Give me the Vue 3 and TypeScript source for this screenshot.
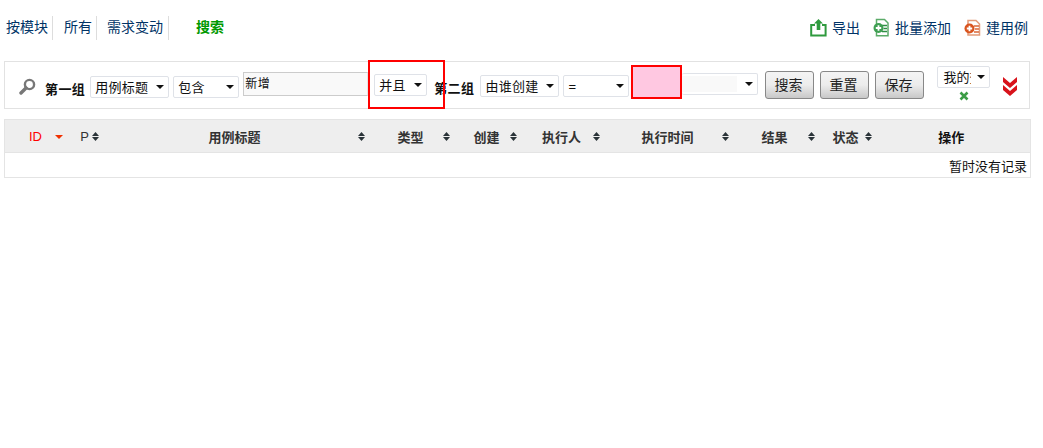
<template>
  <div class="page">
    <div class="top-bar">
      <nav class="tabs">
        <a v-for="tab in tabs" :key="tab" class="tab">{{ tab }}</a>
        <a class="tab-search">搜索</a>
      </nav>
      <div class="actions">
        <a class="action">
          <svg width="17" height="19" viewBox="0 0 17 19">
            <path d="M5 7H1.200v10.600h14.400V7H12" fill="none" stroke="#2f9a3e" stroke-width="2" />
            <path d="M8.500 1 13 5.600h-2.700V12H6.700V5.600H4z" fill="#2f9a3e" />
          </svg>
          导出
        </a>
        <a class="action">
          <svg width="17" height="19" viewBox="0 0 17 19">
            <path d="M3.500 1.500h8l3.500 3.500v12.800H3.500z" fill="#fff" stroke="#5bab69" stroke-width="1.500" />
            <path d="M9 7.500h5M10.500 10.500h3.500M9 13.500h5" stroke="#2f8f44" stroke-width="1.600" />
            <circle cx="5.500" cy="10" r="5" fill="#3f9f52" />
            <path d="M2.800 10h5.400M5.500 7.300v5.400" stroke="#fff" stroke-width="1.800" />
          </svg>
          批量添加
        </a>
        <a class="action">
          <svg width="17" height="19" viewBox="0 0 17 19">
            <path d="M4 2.500h8l3.500 3.500v11H4z" fill="#fff" stroke="#e39a78" stroke-width="1.500" />
            <path d="M10 8h5M11 11h4M10 14h5" stroke="#d9683a" stroke-width="1.600" />
            <circle cx="5.500" cy="10.500" r="5" fill="#d9541e" />
            <path d="M2.800 10.500h5.400M5.500 7.800v5.400" stroke="#fff" stroke-width="1.800" />
          </svg>
          建用例
        </a>
      </div>
    </div>

    <form class="search-bar" @submit.prevent>
      <svg class="search-icon" width="17" height="17" viewBox="0 0 17 17">
        <circle cx="10.500" cy="6.500" r="4.600" fill="#fff" stroke="#777" stroke-width="2.400" />
        <path d="M7 10 2 15" stroke="#777" stroke-width="3.400" stroke-linecap="round" />
      </svg>
      <b class="group-label first">第一组</b>
      <span class="select-wrap field-1">
        <select class="select"><option>用例标题</option></select>
      </span>
      <span class="select-wrap field-2">
        <select class="select"><option>包含</option></select>
      </span>
      <input class="text-input" value="新增" />
      <span class="and-or">
        <span class="select-wrap and-select">
          <select class="select"><option>并且</option></select>
        </span>
        <i class="red-frame"></i>
      </span>
      <b class="group-label second">第二组</b>
      <span class="select-wrap field-3">
        <select class="select"><option>由谁创建</option></select>
      </span>
      <span class="select-wrap field-4">
        <select class="select"><option>=</option></select>
      </span>
      <div class="pink-box"></div>
      <span class="select-wrap value-select">
        <span class="value-fill"></span>
      </span>
      <button class="btn first-btn" type="button">搜索</button>
      <button class="btn" type="button">重置</button>
      <button class="btn" type="button">保存</button>
      <div class="saved">
        <span class="select-wrap saved-select">
          <select class="select"><option>我的查询</option></select>
        </span>
        <svg class="remove" width="10" height="10" viewBox="0 0 10 10">
          <path d="M1.500 1.500l7 7M8.500 1.500l-7 7" stroke="#3c9c46" stroke-width="2.600" />
        </svg>
      </div>
      <svg class="more" width="14" height="19" viewBox="0 0 14 19">
        <path d="M0 0l7 6 7-6v5l-7 6-7-6z" fill="#d8131b" />
        <path d="M0 8l7 6 7-6v5l-7 6-7-6z" fill="#d8131b" />
      </svg>
    </form>

    <table class="list">
      <thead>
        <tr>
          <th
            v-for="col in columns"
            :key="col.label"
            :class="{ active: col.label === 'ID', dark: col.label === '操作', thin: col.label === 'P' }"
            :style="{ width: col.width + 'px' }"
          >
            {{ col.label }}
            <i v-if="col.label === 'ID'" class="caret-down"></i>
            <svg
              v-else-if="col.sort !== undefined"
              class="sort"
              :style="{ right: col.sort + 'px' }"
              width="7"
              height="9"
              viewBox="0 0 7 9"
            >
              <path d="M3.500 0 7 4H0zM0 5h7L3.500 9z" fill="#2a3338" />
            </svg>
          </th>
        </tr>
      </thead>
      <tbody>
        <tr>
          <td class="empty" :colspan="columns.length">暂时没有记录</td>
        </tr>
      </tbody>
    </table>
  </div>
</template>

<script setup lang="ts">
interface Column {
  label: string
  width: number
  sort?: number
}

const tabs = ['按模块', '所有', '需求变动']

const columns: Column[] = [
  { label: 'ID', width: 62 },
  { label: 'P', width: 38, sort: 6 },
  { label: '用例标题', width: 262, sort: 2 },
  { label: '类型', width: 90, sort: 7 },
  { label: '创建', width: 62, sort: 2 },
  { label: '执行人', width: 88, sort: 7 },
  { label: '执行时间', width: 124, sort: 2 },
  { label: '结果', width: 90, sort: 6 },
  { label: '状态', width: 52, sort: 1 },
  { label: '操作', width: 158 }
]
</script>

<style>
body {
  background: #fff;
}
</style>

<style scoped>
.page {
  width: 1043px;
  height: 448px;
  overflow: hidden;
  font-family: "Liberation Sans", "Noto Sans CJK SC", sans-serif;
  font-size: 14px;
  color: #111;
}

.top-bar {
  display: flex;
  justify-content: space-between;
  height: 61px;
  padding: 16px 15px 0 6px;
  box-sizing: border-box;
}

.tabs {
  display: flex;
  height: 24px;
  line-height: 22px;
}

.tab {
  color: #003366;
  padding-right: 4px;
  margin-right: 11px;
  border-right: 1px solid #ddd;
}

.tab:nth-child(2) {
  margin-right: 10px;
}

.tab:nth-child(3) {
  padding-right: 5px;
}

.tab-search {
  margin-left: 16px;
  color: #009900;
  font-weight: 700;
}

.actions {
  display: flex;
  gap: 5px;
  height: 22px;
}

.action {
  display: flex;
  align-items: center;
  gap: 5px;
  margin-left: 8px;
  color: #003366;
}

.search-bar {
  display: flex;
  align-items: flex-start;
  width: 1026px;
  height: 48px;
  margin: 0 0 0 4px;
  padding-left: 14px;
  box-sizing: border-box;
  border: 1px solid #e2e2e2;
}

.search-icon {
  margin-top: 16px;
}

.group-label {
  font-size: 13px;
  line-height: 18px;
  letter-spacing: 0.4px;
  white-space: nowrap;
}

.group-label.first {
  margin: 19px 5px 0 9px;
}

.group-label.second {
  margin: 18px 6px 0 7px;
}

.select-wrap {
  position: relative;
  display: block;
  height: 22px;
  box-sizing: border-box;
  background: #fff;
  border: 1px solid #dfe2e8;
  border-radius: 2px;
}

.select-wrap::after {
  content: "";
  position: absolute;
  top: 8px;
  right: 4px;
  border-style: solid;
  border-width: 4px 4px 0;
  border-color: #111 transparent transparent;
  pointer-events: none;
}

.select {
  display: block;
  width: 100%;
  height: 100%;
  padding: 0 16px 0 4px;
  border: 0;
  background: transparent;
  appearance: none;
  font-family: inherit;
  font-size: 13px;
  letter-spacing: 0.3px;
  color: #111;
  outline: none;
}

.field-1 {
  width: 79px;
  margin-top: 14px;
}

.field-2 {
  width: 66px;
  margin: 14px 0 0 4px;
}

.text-input {
  width: 125px;
  height: 24px;
  margin: 10px 0 0 4px;
  padding: 0 1px 4px;
  box-sizing: border-box;
  border: 1px solid #ccc;
  border-right-color: #e5e5e5;
  background: #f9f9f9;
  font-family: inherit;
  font-size: 12px;
  letter-spacing: 0.5px;
  color: #111;
}

.and-or {
  position: relative;
  display: block;
  margin: 12px 0 0 6px;
}

.and-select {
  width: 53px;
}

.red-frame {
  position: absolute;
  top: -14px;
  left: -6px;
  width: 77px;
  height: 49px;
  box-sizing: border-box;
  border: 2px solid #f00;
  pointer-events: none;
}

.field-3 {
  width: 79px;
  margin-top: 13px;
}

.field-4 {
  width: 66px;
  margin: 13px 0 0 4px;
}

.pink-box {
  width: 51px;
  height: 34px;
  margin: 3px 0 0 2px;
  box-sizing: border-box;
  background: #ffc8e1;
  border: 2px solid #f00;
}

.value-select {
  width: 76px;
  margin-top: 11px;
  border-left: 0;
}

.value-fill {
  position: absolute;
  top: 2px;
  left: 0;
  width: 55px;
  height: 16px;
  background: #f9f9f9;
}

.btn {
  width: 49px;
  height: 28px;
  margin: 9px 0 0 6px;
  padding: 0 3px 3px 0;
  border: 1px solid #888;
  border-radius: 3px;
  background: linear-gradient(#f4f4f4, #ececec 50%, #c8c8c8);
  font-family: inherit;
  font-size: 14px;
  color: #222;
}

.first-btn {
  margin-left: 7px;
}

.saved {
  display: flex;
  flex-direction: column;
  align-items: center;
  margin: 4px 0 0 13px;
}

.saved-select {
  width: 53px;
}

.saved-select .select {
  padding: 0 18px 0 5px;
  letter-spacing: 0;
}

.remove {
  margin-top: 3px;
}

.more {
  margin: 15px 0 0 13px;
}

.list {
  width: 1026px;
  margin: 10px 0 0 4px;
  border-collapse: collapse;
  table-layout: fixed;
}

.list th {
  position: relative;
  height: 33px;
  padding: 0 2px 0 0;
  box-sizing: border-box;
  background: #eee;
  border: 1px solid #e4e4e4;
  border-width: 1px 0;
  font-size: 13px;
  color: #333;
}

.list th:first-child {
  border-left-width: 1px;
}

.list th:last-child {
  border-right-width: 1px;
}

.list th.active {
  color: #f00;
  text-align: left;
  padding: 0 0 0 24px;
  font-weight: 400;
}

.list th.thin {
  font-weight: 400;
}

.list th.dark {
  padding: 0;
  color: #111;
}

.caret-down {
  position: absolute;
  top: 15px;
  left: 50px;
  border-style: solid;
  border-width: 4px 4px 0;
  border-color: #f03000 transparent transparent;
}

.sort {
  position: absolute;
  top: 12px;
}

.empty {
  height: 25px;
  padding: 0 3px 0 0;
  box-sizing: border-box;
  border: 1px solid #e4e4e4;
  text-align: right;
  font-size: 13px;
  color: #111;
}
</style>
